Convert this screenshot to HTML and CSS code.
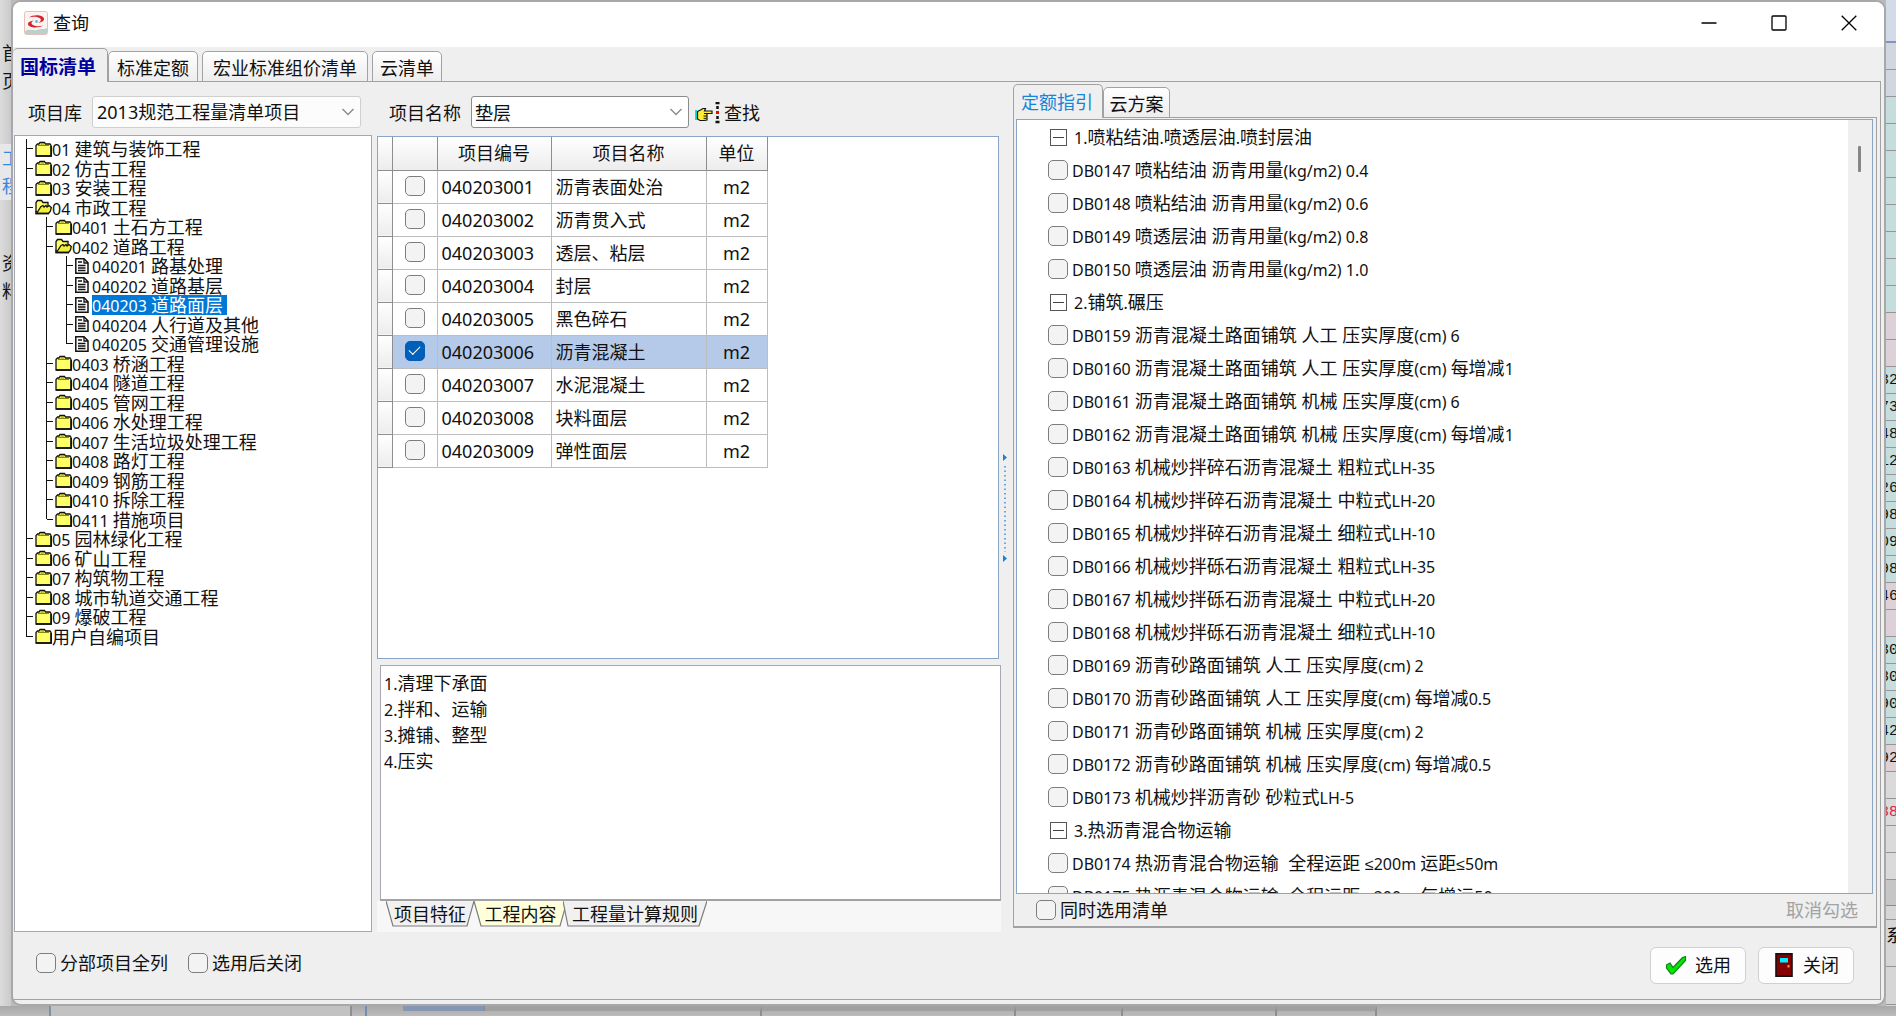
FILE: index.html
```html
<!DOCTYPE html>
<html lang="zh-CN">
<head>
<meta charset="utf-8">
<title>查询</title>
<link rel="stylesheet" href="styles.css">
</head>
<body>
<svg class="defs" aria-hidden="true">
  <symbol id="folder" viewBox="0 0 17 16">
    <path d="M1 15V4.500L2.500 3H4L5 1.500H9.500L10.500 3H15L16 4.500V15Z" fill="#ffff66" stroke="#111" stroke-width="1.300"/>
    <path d="M3 4.500H14M5.500 3H9" stroke="#8a8a10" fill="none"/>
    <path d="M1 15H16.300V5" stroke="#111" stroke-width="1.600" fill="none"/>
  </symbol>
  <symbol id="folder-open" viewBox="0 0 17 16">
    <path d="M1 13V3.500L2.500 1.500H6.500L8 3.500H13V7" fill="#ffff66" stroke="#111" stroke-width="1.300"/>
    <path d="M1.500 14.500L6 7.500L8 6.500L9 8L11 6.500L12 8L14 6.500L16.300 8.500L15.500 12L13.500 14.500Z" fill="#f0f03a" stroke="#111" stroke-width="1.300"/>
    <path d="M1 12V14.500H14" stroke="#111" stroke-width="1.500" fill="none"/>
  </symbol>
  <symbol id="doc" viewBox="0 0 17 16">
    <path d="M.800 .800H9L13 4.800V15.200H.800Z" fill="#fff" stroke="#111" stroke-width="1.500"/>
    <path d="M9 1V5H13M3 4H7M3 7.500H10.500M3 10H10.500M3 12.500H10.500" fill="none" stroke="#111" stroke-width="1.300"/>
  </symbol>
  <symbol id="chevron" viewBox="0 0 14 10">
    <path d="M1.500 2L7 7.500L12.500 2" fill="none" stroke="#8a8a8a" stroke-width="1.400"/>
  </symbol>
</svg>

<div class="desktop">
  <aside class="under-left">
    <div class="under-item">首<br>页</div>
    <div class="under-item under-active">工<br>程</div>
    <div class="under-item">资<br>料</div>
  </aside>

  <main class="window">
    <header class="titlebar">
      <svg class="app-icon" viewBox="0 0 24 24">
        <rect x=".5" y=".5" width="23" height="23" rx="2" fill="#fbf3ef" stroke="#e3c3b8"/>
        <path d="M1 20C6 17 9 20 13 19C17 17 20 19 23 17V23H1Z" fill="#b9d0cf"/>
        <path d="M5 6.500C9 3 19 3.500 20 7.500C20.500 10 17 11.500 14.500 11.800C17 10.500 17.800 8.500 15.500 7C12.500 5.300 8 5.500 5 6.500Z" fill="#d8232f"/>
        <path d="M19.500 14.500C15 17.500 5 17 4 13.500C3.600 11 7 9.800 10 9.500C7.500 10.500 6.500 12.500 9 14C12 15.800 16 15.500 19.500 14.500Z" fill="#d8232f"/>
        <circle cx="12.500" cy="10.500" r="1.400" fill="#6fb3dc"/>
      </svg>
      <h1 class="title">查询</h1>
      <div class="caption">
        <button class="cap" aria-label="最小化"><svg viewBox="0 0 16 16"><path d="M.5 8H15.500" /></svg></button>
        <button class="cap" aria-label="最大化"><svg viewBox="0 0 16 16"><rect x="1" y="1" width="14" height="14" rx="1"/></svg></button>
        <button class="cap" aria-label="关闭窗口"><svg viewBox="0 0 16 16"><path d="M.7.7L15.300 15.300M15.300.7L.7 15.300"/></svg></button>
      </div>
    </header>

    <nav class="tabs main-tabs">
      <button class="tab active">国标清单</button>
      <button class="tab">标准定额</button>
      <button class="tab">宏业标准组价清单</button>
      <button class="tab">云清单</button>
    </nav>

    <section class="page">
      <form class="toolbar">
        <label class="lib-label" for="lib">项目库</label>
        <span class="combo lib">
          <select id="lib"><option>2013规范工程量清单项目</option></select>
          <svg class="chev"><use href="#chevron"/></svg>
        </span>
        <label class="name-label" for="name">项目名称</label>
        <span class="combo name">
          <input id="name" type="text" value="垫层">
          <svg class="chev"><use href="#chevron"/></svg>
        </span>
        <button type="button" class="find">
          <svg class="find-icon" viewBox="0 0 26 22">
            <path d="M1 8H3V18H1Z" fill="#00e5e5"/>
            <path d="M3.500 9.500L6.500 8L9 6.500H11.500L10.500 9H18V11.500H13V18L10 18.500H6L3.500 17Z" fill="#ffee33" stroke="#111" stroke-width="1.200"/>
            <path d="M10 11.500H13M9.500 14H13M9.500 16.300H12.500" stroke="#111"/>
            <path d="M21.500 1H25.500M23.500 4V7M23.500 14V17M21.500 20H25.500" stroke="#111" stroke-width="2.500"/>
            <rect x="22" y="9" width="3" height="3" fill="#f00"/>
          </svg>查找</button>
      </form>

      <div class="tree">
        <ul class="tree-rows">
          <li><i class="b"></i><svg><use href="#folder"/></svg><span class="t"><span class="n">01 </span>建筑与装饰工程</span></li>
          <li><i class="b"></i><svg><use href="#folder"/></svg><span class="t"><span class="n">02 </span>仿古工程</span></li>
          <li><i class="b"></i><svg><use href="#folder"/></svg><span class="t"><span class="n">03 </span>安装工程</span></li>
          <li><i class="b"></i><svg><use href="#folder-open"/></svg><span class="t"><span class="n">04 </span>市政工程</span></li>
          <li><i class="g"></i><i class="b"></i><svg><use href="#folder"/></svg><span class="t"><span class="n">0401 </span>土石方工程</span></li>
          <li><i class="g"></i><i class="b"></i><svg><use href="#folder-open"/></svg><span class="t"><span class="n">0402 </span>道路工程</span></li>
          <li><i class="g"></i><i class="g"></i><i class="b"></i><svg><use href="#doc"/></svg><span class="t"><span class="n">040201 </span>路基处理</span></li>
          <li><i class="g"></i><i class="g"></i><i class="b"></i><svg><use href="#doc"/></svg><span class="t"><span class="n">040202 </span>道路基层</span></li>
          <li><i class="g"></i><i class="g"></i><i class="b"></i><svg><use href="#doc"/></svg><span class="t sel"><span class="n">040203 </span>道路面层</span></li>
          <li><i class="g"></i><i class="g"></i><i class="b"></i><svg><use href="#doc"/></svg><span class="t"><span class="n">040204 </span>人行道及其他</span></li>
          <li><i class="g"></i><i class="g"></i><i class="b end"></i><svg><use href="#doc"/></svg><span class="t"><span class="n">040205 </span>交通管理设施</span></li>
          <li><i class="g"></i><i class="b"></i><svg><use href="#folder"/></svg><span class="t"><span class="n">0403 </span>桥涵工程</span></li>
          <li><i class="g"></i><i class="b"></i><svg><use href="#folder"/></svg><span class="t"><span class="n">0404 </span>隧道工程</span></li>
          <li><i class="g"></i><i class="b"></i><svg><use href="#folder"/></svg><span class="t"><span class="n">0405 </span>管网工程</span></li>
          <li><i class="g"></i><i class="b"></i><svg><use href="#folder"/></svg><span class="t"><span class="n">0406 </span>水处理工程</span></li>
          <li><i class="g"></i><i class="b"></i><svg><use href="#folder"/></svg><span class="t"><span class="n">0407 </span>生活垃圾处理工程</span></li>
          <li><i class="g"></i><i class="b"></i><svg><use href="#folder"/></svg><span class="t"><span class="n">0408 </span>路灯工程</span></li>
          <li><i class="g"></i><i class="b"></i><svg><use href="#folder"/></svg><span class="t"><span class="n">0409 </span>钢筋工程</span></li>
          <li><i class="g"></i><i class="b"></i><svg><use href="#folder"/></svg><span class="t"><span class="n">0410 </span>拆除工程</span></li>
          <li><i class="g"></i><i class="b end"></i><svg><use href="#folder"/></svg><span class="t"><span class="n">0411 </span>措施项目</span></li>
          <li><i class="b"></i><svg><use href="#folder"/></svg><span class="t"><span class="n">05 </span>园林绿化工程</span></li>
          <li><i class="b"></i><svg><use href="#folder"/></svg><span class="t"><span class="n">06 </span>矿山工程</span></li>
          <li><i class="b"></i><svg><use href="#folder"/></svg><span class="t"><span class="n">07 </span>构筑物工程</span></li>
          <li><i class="b"></i><svg><use href="#folder"/></svg><span class="t"><span class="n">08 </span>城市轨道交通工程</span></li>
          <li><i class="b"></i><svg><use href="#folder"/></svg><span class="t"><span class="n">09 </span>爆破工程</span></li>
          <li><i class="b end"></i><svg><use href="#folder"/></svg><span class="t">用户自编项目</span></li>
        </ul>
      </div>

      <div class="middle">
        <div class="grid-box">
          <table class="items">
            <colgroup><col class="c-ind"><col class="c-chk"><col class="c-code"><col class="c-name"><col class="c-unit"></colgroup>
            <thead><tr><th></th><th></th><th>项目编号</th><th>项目名称</th><th>单位</th></tr></thead>
            <tbody>
              <tr><th></th><td><input type="checkbox" aria-label="040203001"></td><td>040203001</td><td>沥青表面处治</td><td>m2</td></tr>
              <tr><th></th><td><input type="checkbox" aria-label="040203002"></td><td>040203002</td><td>沥青贯入式</td><td>m2</td></tr>
              <tr><th></th><td><input type="checkbox" aria-label="040203003"></td><td>040203003</td><td>透层、粘层</td><td>m2</td></tr>
              <tr><th></th><td><input type="checkbox" aria-label="040203004"></td><td>040203004</td><td>封层</td><td>m2</td></tr>
              <tr><th></th><td><input type="checkbox" aria-label="040203005"></td><td>040203005</td><td>黑色碎石</td><td>m2</td></tr>
              <tr class="picked"><th></th><td><input type="checkbox" aria-label="040203006" checked></td><td>040203006</td><td>沥青混凝土</td><td>m2</td></tr>
              <tr><th></th><td><input type="checkbox" aria-label="040203007"></td><td>040203007</td><td>水泥混凝土</td><td>m2</td></tr>
              <tr><th></th><td><input type="checkbox" aria-label="040203008"></td><td>040203008</td><td>块料面层</td><td>m2</td></tr>
              <tr><th></th><td><input type="checkbox" aria-label="040203009"></td><td>040203009</td><td>弹性面层</td><td>m2</td></tr>
            </tbody>
          </table>
        </div>
        <div class="notes">
          <p><span class="n">1.</span>清理下承面</p>
          <p><span class="n">2.</span>拌和、运输</p>
          <p><span class="n">3.</span>摊铺、整型</p>
          <p><span class="n">4.</span>压实</p>
        </div>
        <nav class="sheet-tabs">
          <button class="sheet"><svg viewBox="0 0 88 26" preserveAspectRatio="none"><path d="M0 0L7 25H81L88 0"/></svg><span>项目特征</span></button>
          <button class="sheet on"><svg viewBox="0 0 93 26" preserveAspectRatio="none"><path d="M0 0L7 25H86L93 0"/></svg><span>工程内容</span></button>
          <button class="sheet"><svg viewBox="0 0 144 26" preserveAspectRatio="none"><path d="M0 0L5 25H136L144 0"/></svg><span>工程量计算规则</span></button>
        </nav>
      </div>

      <div class="splitter">
        <svg viewBox="0 0 6 110">
          <path d="M1 1L5 4.500L1 8ZM1 102L5 105.500L1 109Z" fill="#1f7fd6"/>
          <path d="M3 13V99" stroke="#3b90dc" stroke-width="1.500" stroke-dasharray="1.500 3"/>
        </svg>
      </div>

      <section class="guide">
        <nav class="tabs guide-tabs">
          <button class="tab active">定额指引</button>
          <button class="tab">云方案</button>
        </nav>
        <div class="guide-page">
          <div class="list-box">
            <ul class="list">
              <li class="grp"><button class="fold" aria-label="折叠"></button><span><span class="n">1.</span>喷粘结油<span class="n">.</span>喷透层油<span class="n">.</span>喷封层油</span></li>
              <li><label><input type="checkbox"><span><span class="n">DB0147 </span>喷粘结油 沥青用量<span class="n">(kg/m2) 0.4</span></span></label></li>
              <li><label><input type="checkbox"><span><span class="n">DB0148 </span>喷粘结油 沥青用量<span class="n">(kg/m2) 0.6</span></span></label></li>
              <li><label><input type="checkbox"><span><span class="n">DB0149 </span>喷透层油 沥青用量<span class="n">(kg/m2) 0.8</span></span></label></li>
              <li><label><input type="checkbox"><span><span class="n">DB0150 </span>喷透层油 沥青用量<span class="n">(kg/m2) 1.0</span></span></label></li>
              <li class="grp"><button class="fold" aria-label="折叠"></button><span><span class="n">2.</span>铺筑<span class="n">.</span>碾压</span></li>
              <li><label><input type="checkbox"><span><span class="n">DB0159 </span>沥青混凝土路面铺筑 人工 压实厚度<span class="n">(cm) 6</span></span></label></li>
              <li><label><input type="checkbox"><span><span class="n">DB0160 </span>沥青混凝土路面铺筑 人工 压实厚度<span class="n">(cm) </span>每增减<span class="n">1</span></span></label></li>
              <li><label><input type="checkbox"><span><span class="n">DB0161 </span>沥青混凝土路面铺筑 机械 压实厚度<span class="n">(cm) 6</span></span></label></li>
              <li><label><input type="checkbox"><span><span class="n">DB0162 </span>沥青混凝土路面铺筑 机械 压实厚度<span class="n">(cm) </span>每增减<span class="n">1</span></span></label></li>
              <li><label><input type="checkbox"><span><span class="n">DB0163 </span>机械炒拌碎石沥青混凝土 粗粒式<span class="n">LH-35</span></span></label></li>
              <li><label><input type="checkbox"><span><span class="n">DB0164 </span>机械炒拌碎石沥青混凝土 中粒式<span class="n">LH-20</span></span></label></li>
              <li><label><input type="checkbox"><span><span class="n">DB0165 </span>机械炒拌碎石沥青混凝土 细粒式<span class="n">LH-10</span></span></label></li>
              <li><label><input type="checkbox"><span><span class="n">DB0166 </span>机械炒拌砾石沥青混凝土 粗粒式<span class="n">LH-35</span></span></label></li>
              <li><label><input type="checkbox"><span><span class="n">DB0167 </span>机械炒拌砾石沥青混凝土 中粒式<span class="n">LH-20</span></span></label></li>
              <li><label><input type="checkbox"><span><span class="n">DB0168 </span>机械炒拌砾石沥青混凝土 细粒式<span class="n">LH-10</span></span></label></li>
              <li><label><input type="checkbox"><span><span class="n">DB0169 </span>沥青砂路面铺筑 人工 压实厚度<span class="n">(cm) 2</span></span></label></li>
              <li><label><input type="checkbox"><span><span class="n">DB0170 </span>沥青砂路面铺筑 人工 压实厚度<span class="n">(cm) </span>每增减<span class="n">0.5</span></span></label></li>
              <li><label><input type="checkbox"><span><span class="n">DB0171 </span>沥青砂路面铺筑 机械 压实厚度<span class="n">(cm) 2</span></span></label></li>
              <li><label><input type="checkbox"><span><span class="n">DB0172 </span>沥青砂路面铺筑 机械 压实厚度<span class="n">(cm) </span>每增减<span class="n">0.5</span></span></label></li>
              <li><label><input type="checkbox"><span><span class="n">DB0173 </span>机械炒拌沥青砂 砂粒式<span class="n">LH-5</span></span></label></li>
              <li class="grp"><button class="fold" aria-label="折叠"></button><span><span class="n">3.</span>热沥青混合物运输</span></li>
              <li><label><input type="checkbox"><span><span class="n">DB0174 </span>热沥青混合物运输&nbsp; 全程运距 <span class="n">≤200m </span>运距<span class="n">≤50m</span></span></label></li>
              <li><label><input type="checkbox"><span><span class="n">DB0175 </span>热沥青混合物运输&nbsp; 全程运距 <span class="n">≤200m </span>每增运<span class="n">50m</span></span></label></li>
            </ul>
            <div class="scrollbar"><div class="thumb"></div></div>
          </div>
          <div class="guide-foot">
            <label class="check"><input type="checkbox">同时选用清单</label>
            <button class="clear" disabled>取消勾选</button>
          </div>
        </div>
      </section>

      <footer class="footer">
        <label class="check"><input type="checkbox">分部项目全列</label>
        <label class="check"><input type="checkbox">选用后关闭</label>
        <span class="grow"></span>
        <button class="btn">
          <svg viewBox="0 0 22 24"><path d="M1.500 12L5 10L8 14.500L17.500 4.500L20.500 3.500V7.500L8 21H6L1.500 15Z" fill="#00e800" stroke="#13801a" stroke-width="1.200"/></svg>选用</button>
        <button class="btn">
          <svg viewBox="0 0 22 24"><rect x="3" y=".8" width="16" height="22.400" fill="#860000" stroke="#111" stroke-width="1.600"/><rect x="7" y="5" width="8" height="4.500" fill="#00f0ff"/><rect x="14.500" y="12" width="2" height="2.500" fill="#e0a030"/></svg>关闭</button>
      </footer>
    </section>
  </main>

  <aside class="under-right">
    <div class="r-top"></div>
    <div class="r head"></div><div class="r head"></div>
    <div class="r"></div><div class="r"></div><div class="r"></div><div class="r"></div>
    <div class="r"></div><div class="r"></div><div class="r"></div><div class="r"></div>
    <div class="r pink"></div><div class="r pink"></div>
    <div class="r">32</div><div class="r">73</div><div class="r">48</div><div class="r">12</div>
    <div class="r">26</div><div class="r">98</div><div class="r">09</div><div class="r">98</div>
    <div class="r pink">46</div><div class="r pink"></div>
    <div class="r">30</div><div class="r">80</div><div class="r">90</div><div class="r">42</div>
    <div class="r pink">92</div><div class="r gray"></div><div class="r gray red">38</div>
    <div class="r gray"></div><div class="r gray"></div>
    <div class="r-bar"></div><div class="r-gap"></div>
    <div class="r-word">系</div><div class="r-rest"></div>
  </aside>

  <div class="under-bottom">
    <i class="w1"></i><i class="w2"></i><i class="w3"></i><i class="w4"></i><i class="w5"></i><i class="w6"></i><i class="w7"></i><i class="w8"></i><i class="w9"></i><i class="w10"></i>
  </div>
</div>
</body>
</html>
```

FILE: styles.css
```css
* { box-sizing: border-box; }

body {
  margin: 0;
  background: #bababa;
  color: #111;
  font: 18px/24px "Noto Sans", "Liberation Sans", "Noto Sans CJK SC", sans-serif;
}

button, input, select {
  font: inherit;
  color: inherit;
}

button {
  padding: 0;
  border: 0;
  background: none;
  white-space: nowrap;
}

ul { margin: 0; padding: 0; list-style: none; }

.defs { display: none; }
.n { font-size: 16px; line-height: 16px; }

/* Desktop frame: parts of the main program show around the dialog */
.desktop {
  display: grid;
  grid-template: minmax(0, 1fr) 10px / 11px minmax(0, 1fr) 10px;
  height: 100vh;
  overflow: hidden;
}

.under-left {
  overflow: hidden;
  padding-top: 39px;
  background: linear-gradient(90deg, #dcdcdc, #cacaca);
  line-height: 28px;
}
.under-item { width: 24px; margin-bottom: 49px; padding-left: 2px; }
.under-active {
  color: #3a86d8;
  background: #e6e8ea;
}

.under-right {
  overflow: hidden;
  background: #d6d6d6;
  font: 15px/28px "Liberation Mono", "Noto Sans CJK SC", monospace;
}
.r-top { height: 43px; background: #d3dbe9; border-bottom: 2px solid #7f97b8; }
.r {
  height: 27px;
  background: #c5dedd;
  border-bottom: 1px solid #949494;
  text-indent: -6px;
  white-space: nowrap;
}
.r.head { background: #d2d6df; }
.r.pink { background: #ddd0d6; }
.r.gray { background: #dadada; }
.r.red { color: #e0204a; }
.r-bar { height: 26px; background: #c6c6c6; border-bottom: 1px solid #6f8fb4; }
.r-gap { height: 14px; border-bottom: 1px solid #949494; }
.r-word { height: 47px; font-size: 18px; line-height: 34px; border-bottom: 1px solid #949494; }
.r-rest { height: 38px; border-bottom: 1px solid #949494; }

.under-bottom {
  grid-column: 1 / -1;
  display: flex;
  background: linear-gradient(#a8a8a8, #bcbcbc);
}
.under-bottom i { border-right: 2px solid #8e8e8e; }
.under-bottom .w1 { width: 51px; border-color: #7e92a6; }
.under-bottom .w2 { width: 301px; background: #c2c2c2; }
.under-bottom .w3 { width: 15px; border-color: #6f8fb4; }
.under-bottom .w4 { width: 36px; border-color: transparent; }
.under-bottom .w5 { width: 82px; height: 5px; background: #8496b2; }
.under-bottom .w6 { width: 277px; border-top: 5px solid #a0a0a0; }
.under-bottom .w7 { width: 254px; border-top: 5px solid #a0a0a0; }
.under-bottom .w8 { width: 107px; border-top: 5px solid #a0a0a0; }
.under-bottom .w9 { width: 154px; border-top: 5px solid #a0a0a0; }
.under-bottom .w10 { width: 100px; border-top: 5px solid #a0a0a0; }

/* Dialog window */
.window {
  display: flex;
  flex-direction: column;
  min-width: 0;
  overflow: hidden;
  border: 2px solid #a6a8aa;
  border-radius: 10px;
  background: #efefef;
}

.titlebar {
  display: flex;
  align-items: center;
  flex: 0 0 45px;
  padding: 0 0 3px 11px;
  background: #fff;
}
.app-icon { width: 24px; height: 24px; }
.title { margin: 0 0 0 5px; font-size: 18px; font-weight: 400; }
.caption { display: flex; margin-left: auto; }
.cap { display: grid; place-items: center; width: 70px; height: 42px; }
.cap svg {
  width: 16px;
  height: 16px;
  fill: none;
  stroke: #000;
  stroke-width: 1.300;
}

/* Tabs */
.tabs {
  display: flex;
  align-items: flex-end;
  box-shadow: inset 0 -1px #a2a2a2;
}
.tab {
  height: 31px;
  padding: 2px 0 0;
  border: 1px solid #a2a2a2;
  border-radius: 5px 5px 0 0;
  background: linear-gradient(#fff, #ededed);
}
.tab.active { height: 34px; padding: 0; border-bottom: 0; background: #efefef; }

.main-tabs { flex: 0 0 35px; margin-right: 3px; gap: 4px; }
.main-tabs .tab { padding: 2px 8px 0; }
.main-tabs .tab:first-child {
  width: 95px;
  margin-right: -4px;
  padding: 2px 4px 0 0;
  border-left: 0;
  color: #0000a0;
  font-size: 19px;
  font-weight: 700;
}
.main-tabs .tab:nth-child(3) { padding: 2px 10px 0; }
.main-tabs .tab:last-child { padding: 2px 7px 0; }

/* Page body */
.page {
  display: grid;
  grid-template-columns: 358px minmax(0, 629fr) 12px minmax(0, 864fr);
  grid-template-rows: 53px minmax(0, 1fr) 67px;
  flex: 1;
  min-height: 0;
  margin: 0 3px 4px 0;
  padding: 0 3px 0 1px;
  border: solid #a2a2a2;
  border-width: 0 1px 1px 0;
}

.toolbar {
  grid-area: 1 / 1 / 2 / 3;
  display: flex;
  align-items: center;
  padding: 8px 0 0 14px;
}
.lib-label { margin-right: 10px; }
.name-label { margin: 0 10px 0 28px; }
.combo { display: grid; height: 32px; margin-bottom: 2px; }
.combo > * { grid-area: 1 / 1; }
.combo select, .combo input {
  min-width: 0;
  width: 100%;
  height: 32px;
  padding: 0 4px;
  border: 1px solid #cfcfcf;
  border-radius: 3px;
  background: #fcfcfc;
  appearance: none;
}
.combo input { padding: 0 3px; border-color: #8c8c8c; background: #fff; }
.lib { width: 269px; }
.name { width: 218px; }
.chev {
  justify-self: end;
  align-self: center;
  width: 14px;
  height: 10px;
  margin-right: 6px;
  pointer-events: none;
}
.find { display: flex; align-items: center; gap: 4px; margin-left: 5px; }
.find-icon { width: 26px; height: 22px; }

/* Tree */
.tree {
  grid-area: 2 / 1;
  overflow: hidden;
  padding: 3px 0 0 11px;
  border: 1px solid #a5a8b0;
  background: #fff;
}
.tree-rows {
  display: grid;
  grid-auto-rows: 1fr;
  height: 507px;
}
.tree-rows li { display: flex; align-items: stretch; min-height: 0; }
.tree-rows svg { align-self: center; flex: none; width: 17px; height: 16px; }
.t { height: 20px; line-height: 20px; white-space: nowrap; }
.sel { background: #0078d7; color: #fff; padding-right: 4px; }
.g, .b { flex: none; border-left: 1px solid #111; }
.g { width: 20px; }
.b {
  width: 9px;
  background: linear-gradient(#111, #111) 0 50% / 6px 1px no-repeat;
}
.b.end {
  border-image: linear-gradient(#111 50%, transparent 50%) 1;
}

/* Middle column */
.middle {
  grid-area: 2 / 2;
  display: flex;
  flex-direction: column;
  min-height: 0;
  padding: 1px 0 0 5px;
}
.grid-box {
  flex: 1;
  min-height: 0;
  overflow: hidden;
  margin-right: 2px;
  border: 1px solid #8aa6c6;
  background: #fff;
}
.items { border-collapse: collapse; table-layout: fixed; width: 389px; }
.c-ind { width: 14px; }
.c-chk { width: 45px; }
.c-code { width: 114px; }
.c-name { width: 155px; }
.c-unit { width: 61px; }
.items tr { height: 33px; }
.items th {
  padding: 0;
  border: 1px solid #8e8e8e;
  background: linear-gradient(#fff, #ececec);
  font-weight: 400;
}
.items th:first-child { border-left: 0; }
.items thead th { border-top: 0; }
.items td { padding: 0 4px; border: 1px solid #bdbdbd; }
.items td:nth-child(2), .items td:last-child { padding: 0; text-align: center; }
.picked td { background: #b5c9e8; }

input[type="checkbox"] {
  appearance: none;
  flex: none;
  display: inline-grid;
  place-items: center;
  width: 20px;
  height: 20px;
  margin: 0;
  border: 1px solid #7d7d7d;
  border-radius: 5px;
  background: #f3f3f3;
}
.items input { vertical-align: middle; margin-bottom: 4px; }
input[type="checkbox"]:checked { border-color: #0060b9; background: #0060b9; }
input[type="checkbox"]:checked::after {
  content: "";
  width: 10px;
  height: 5px;
  margin-bottom: 3px;
  border: solid #fff;
  border-width: 0 0 1px 1px;
  transform: rotate(-45deg);
}

.notes {
  flex: 0 0 236px;
  margin: 6px 0 0 3px;
  padding: 4px 3px;
  border: 1px solid #a8a8b0;
  border-bottom: 2px solid #a2a2a6;
  background: #fff;
}
.notes p { margin: 0; line-height: 26px; }

.sheet-tabs {
  display: flex;
  flex: 0 0 31px;
  padding-left: 9px;
  background: #f7f7f7;
}
.sheet { display: grid; width: 88px; height: 26px; }
.sheet > * { grid-area: 1 / 1; }
.sheet svg { width: 100%; height: 26px; fill: #f1f1f1; stroke: #7c7c7c; stroke-width: 1.200; }
.sheet.on svg { fill: #ffffdc; }
.sheet.on { width: 93px; }
.sheet:last-child { width: 144px; margin-left: -4px; }
.sheet span { line-height: 26px; }

.splitter { grid-area: 2 / 3; display: flex; justify-content: center; padding-top: 318px; }
.splitter svg { width: 6px; height: 110px; margin-right: 4px; }

/* Quota guide */
.guide {
  grid-area: 1 / 4 / 3 / 5;
  display: flex;
  flex-direction: column;
  min-height: 0;
  padding: 2px 0 4px;
}
.guide-tabs { flex: 0 0 34px; }
.guide-tabs .tab { width: 67px; }
.guide-tabs .active { width: 90px; padding-right: 2px; color: #1585dc; }
.guide-page {
  display: flex;
  flex-direction: column;
  flex: 1;
  min-height: 0;
  padding: 1px 3px 0 2px;
  border: solid #a2a2a2;
  border-width: 0 1px 2px;
}
.list-box {
  display: flex;
  flex: 1;
  min-height: 0;
  overflow: hidden;
  border: 1px solid #8aa6c6;
  background: #fff;
}
.list { flex: 1; min-width: 0; padding-left: 31px; }
.list li, .list label { display: flex; align-items: center; height: 33px; white-space: nowrap; }
.list label { gap: 4px; }
.list .grp { gap: 7px; padding: 1px 0 0 2px; }
.fold {
  width: 17px;
  height: 17px;
  border: 1px solid #555;
  background: linear-gradient(#444, #444) center / 11px 1px no-repeat;
}
.scrollbar { width: 24px; padding: 26px 11px 0 10px; background: #efefef; }
.thumb { height: 26px; border-radius: 1px; background: #868686; }
.guide-foot {
  display: flex;
  align-items: center;
  justify-content: space-between;
  flex: 0 0 32px;
  padding: 0 15px 0 20px;
}
.check { display: flex; align-items: center; gap: 4px; white-space: nowrap; }
.clear { color: #a3a3a3; }

/* Footer */
.footer {
  grid-area: 3 / 1 / 4 / 5;
  display: flex;
  align-items: center;
  gap: 20px;
  padding: 0 23px 5px 22px;
}
.grow { flex: 1; }
.btn {
  display: flex;
  align-items: center;
  justify-content: center;
  gap: 8px;
  width: 96px;
  height: 37px;
  margin: 4px 0 0 -8px;
  border: 1px solid #d0d0d0;
  border-radius: 6px;
  background: #fdfdfd;
}
.btn svg { width: 22px; height: 24px; }
```
